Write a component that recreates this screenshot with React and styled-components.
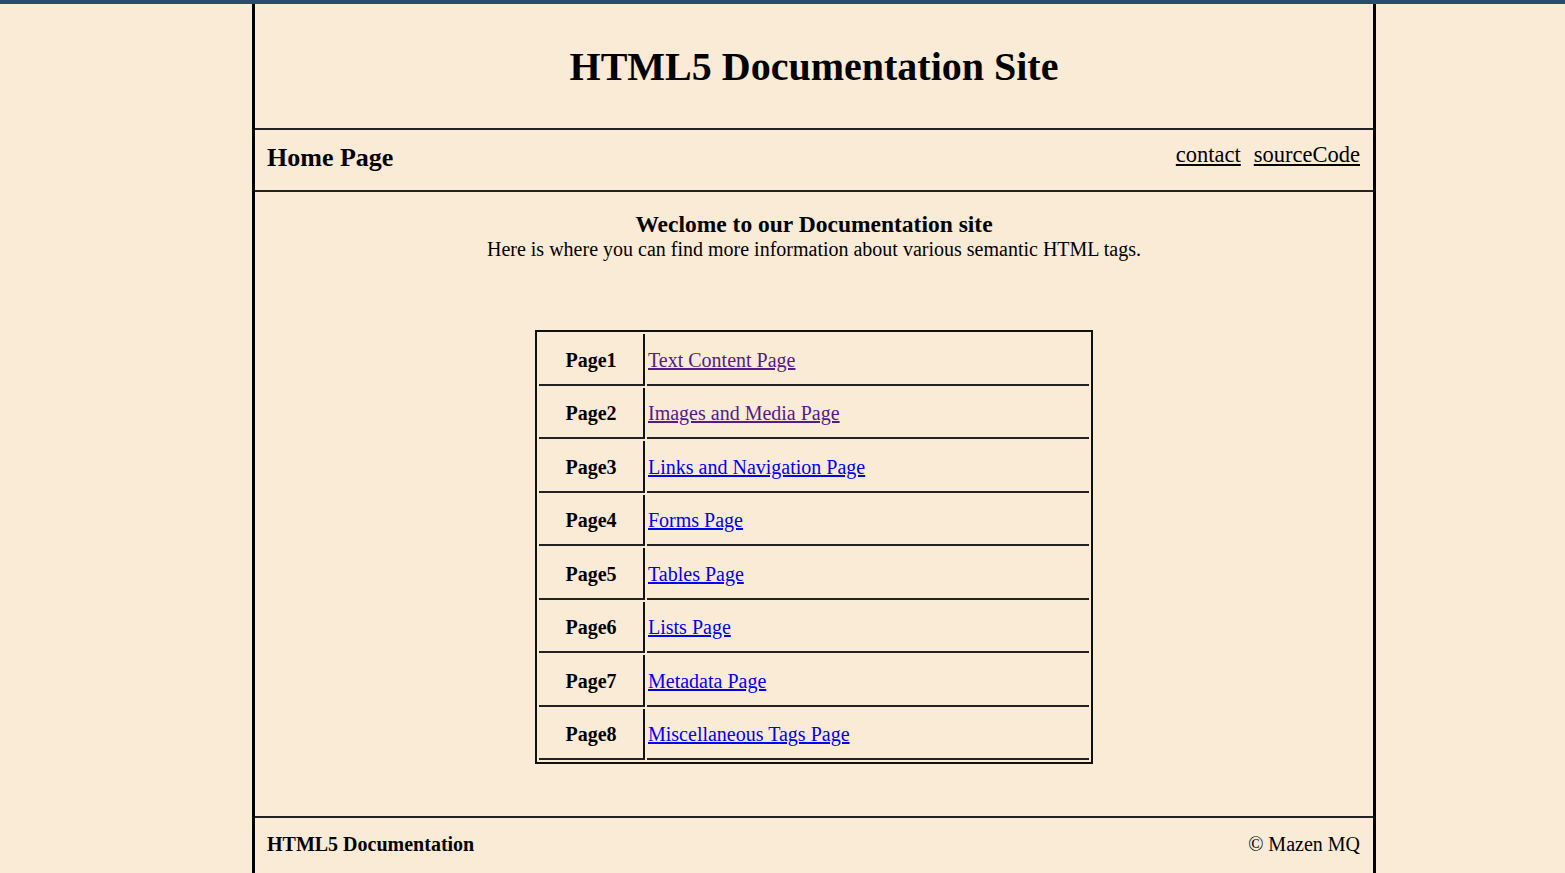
import React from "react"
import styled, { createGlobalStyle } from "styled-components"

const GlobalStyle = createGlobalStyle`
    html, body {
        margin: 0;
        padding: 0;
        background: #faebd7;
        font-family: "Liberation Serif", "Times New Roman", serif;
        color: #000;
    }
    body {
        border-top: 4px solid #2b4a6d;
    }
`

const PageStyled = styled.div`
    width: 1124px;
    margin-left: 252px;
    box-sizing: border-box;
    border-left: 3px solid #000;
    border-right: 3px solid #000;
    min-height: 869px;
`

const HeaderStyled = styled.header`
    height: 124px;
    display: flex;
    align-items: center;
    justify-content: center;
    border-bottom: 2px solid #222;

    h1 {
        margin: 0;
        font-size: 40px;
        font-weight: bold;
    }
`

const NavStyled = styled.nav`
    height: 60px;
    display: flex;
    align-items: center;
    justify-content: space-between;
    padding: 0 13px 0 12px;
    border-bottom: 2px solid #222;

    .nav_title {
        margin: -5px 0 0;
        font-size: 26px;
        font-weight: bold;
    }
    .nav_links {
        display: flex;
        gap: 13px;
        margin-top: -10px;
    }
`

const NavLink = styled.a`
    font-size: 22.5px;
    color: #000;
    text-decoration: underline;
`

const MainStyled = styled.main`
    padding: 19px 0 52px;
    border-bottom: 2px solid #222;

    .main_title {
        margin: 0;
        text-align: center;
        font-size: 23.5px;
        font-weight: bold;
        line-height: 26px;
    }
    .main_description {
        margin: 0;
        text-align: center;
        font-size: 20px;
        line-height: 24px;
    }
`

const TableStyled = styled.table`
    margin: 69px auto 0;
    width: 558px;
    border: 2px solid #111;
    border-collapse: separate;
    border-spacing: 2px;

    td {
        box-sizing: border-box;
        height: 51.5px;
        padding: 3px 1px 0;
        border-bottom: 2px solid #222;
        font-size: 20px;
    }
    td.page_name {
        width: 106px;
        text-align: center;
        font-weight: bold;
        border-right: 2px solid #111;
    }
`

const PageLink = styled.a`
    color: ${(props) => (props.$visited ? "#551a8b" : "#0000ee")};
    text-decoration: underline;
`

const FooterStyled = styled.footer`
    height: 52px;
    display: flex;
    align-items: center;
    justify-content: space-between;
    padding: 0 13px 0 12px;

    .footer_title {
        font-size: 20px;
        font-weight: bold;
    }
    .footer_copy {
        font-size: 20px;
    }
`

const pages = [
    { name: "Page1", title: "Text Content Page", visited: true },
    { name: "Page2", title: "Images and Media Page", visited: true },
    { name: "Page3", title: "Links and Navigation Page" },
    { name: "Page4", title: "Forms Page" },
    { name: "Page5", title: "Tables Page" },
    { name: "Page6", title: "Lists Page" },
    { name: "Page7", title: "Metadata Page" },
    { name: "Page8", title: "Miscellaneous Tags Page" },
]

function App() {
    return (
        <>
            <GlobalStyle />
            <PageStyled>
                <HeaderStyled>
                    <h1>HTML5 Documentation Site</h1>
                </HeaderStyled>

                <NavStyled>
                    <h2 className="nav_title">Home Page</h2>
                    <div className="nav_links">
                        <NavLink href="#">contact</NavLink>
                        <NavLink href="#">sourceCode</NavLink>
                    </div>
                </NavStyled>

                <MainStyled>
                    <h3 className="main_title">Weclome to our Documentation site</h3>
                    <p className="main_description">
                        Here is where you can find more information about various semantic HTML tags.
                    </p>
                    <TableStyled>
                        <tbody>
                            {pages.map((page) => (
                                <tr key={page.name}>
                                    <td className="page_name">{page.name}</td>
                                    <td>
                                        <PageLink href="#" $visited={page.visited}>{page.title}</PageLink>
                                    </td>
                                </tr>
                            ))}
                        </tbody>
                    </TableStyled>
                </MainStyled>

                <FooterStyled>
                    <span className="footer_title">HTML5 Documentation</span>
                    <span className="footer_copy">© Mazen MQ</span>
                </FooterStyled>
            </PageStyled>
        </>
    )
}

export default App
